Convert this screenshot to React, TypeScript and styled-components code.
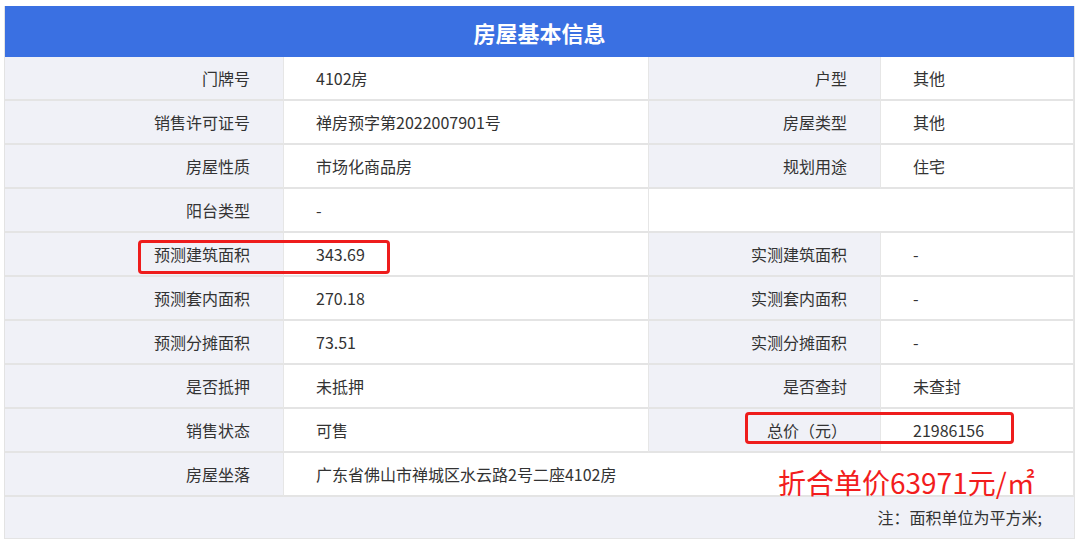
import React from "react";
import styled, { createGlobalStyle } from "styled-components";

const G = createGlobalStyle`
  body { margin: 0; background: #fff; font-family: "Noto Sans CJK SC", "Liberation Sans", sans-serif; }
`;
const Wrap = styled.div`
  position: relative;
  margin: 6px 5px 0 4px;
  border-right: 1px solid #e3e3e3;
  border-left: 1px solid #e3e3e3;
`;
const Header = styled.div`
  height: 51px; background: #3a70e2; color: #fff;
  font-size: 22px; font-weight: bold;
  display: flex; align-items: center; justify-content: center;
`;
const Grid = styled.div`
  display: grid;
  grid-template-columns: 279px 365px 232px 1fr;
`;
const Cell = styled.div<{ $label?: boolean; $span?: number; $blank?: boolean }>`
  height: 42px;
  border-bottom: 2px solid #e4e4e4;
  border-right: 1px solid #e6e6e6;
  background: ${p => (p.$label ? "#f0f1f7" : "#fff")};
  display: flex; align-items: center;
  justify-content: ${p => (p.$label ? "flex-end" : "flex-start")};
  padding: ${p => (p.$label ? "0 33px 0 0" : "0 0 0 32px")};
  font-size: 16px; color: #333;
  grid-column: span ${p => p.$span || 1};
`;
const Note = styled.div`
  height: 42px; background: #f0f1f7; border-bottom: 1px solid #e4e4e4;
  display: flex; align-items: flex-end; justify-content: flex-end;
  padding-right: 32px; padding-bottom: 0; box-sizing: border-box; padding-bottom: 9px;
  font-size: 16px; color: #333;
`;
const RedBox = styled.div<{ $x: number; $y: number; $w: number; $h: number }>`
  position: absolute; left: ${p => p.$x}px; top: ${p => p.$y}px;
  width: ${p => p.$w}px; height: ${p => p.$h}px;
  border: 3px solid #ee1c1c; border-radius: 4px; box-sizing: border-box;
`;
const RedText = styled.div`
  position: absolute; left: 773px; top: 460px; line-height: 1.2;
  color: #f21d1d; font-size: 28px; font-family: "Noto Sans CJK SC", sans-serif;
`;

const rows: [string, string, string?, string?][] = [
  ["门牌号", "4102房", "户型", "其他"],
  ["销售许可证号", "禅房预字第2022007901号", "房屋类型", "其他"],
  ["房屋性质", "市场化商品房", "规划用途", "住宅"],
  ["阳台类型", "-"],
  ["预测建筑面积", "343.69", "实测建筑面积", "-"],
  ["预测套内面积", "270.18", "实测套内面积", "-"],
  ["预测分摊面积", "73.51", "实测分摊面积", "-"],
  ["是否抵押", "未抵押", "是否查封", "未查封"],
  ["销售状态", "可售", "总价（元）", "21986156"],
];

export default function App() {
  return (
    <>
      <G />
      <Wrap>
        <Header>房屋基本信息</Header>
        <Grid>
          {rows.map((r, i) => (
            <React.Fragment key={i}>
              <Cell $label>{r[0]}</Cell>
              <Cell>{r[1]}</Cell>
              {r[2] ? (
                <>
                  <Cell $label>{r[2]}</Cell>
                  <Cell>{r[3]}</Cell>
                </>
              ) : (
                <Cell $span={2} />
              )}
            </React.Fragment>
          ))}
          <Cell $label>房屋坐落</Cell>
          <Cell $span={3}>广东省佛山市禅城区水云路2号二座4102房</Cell>
        </Grid>
        <Note>注：面积单位为平方米;</Note>
        <RedBox $x={133} $y={234} $w={252} $h={34} />
        <RedBox $x={740} $y={406} $w={269} $h={32} />
        <RedText>折合单价63971元/㎡</RedText>
      </Wrap>
    </>
  );
}
